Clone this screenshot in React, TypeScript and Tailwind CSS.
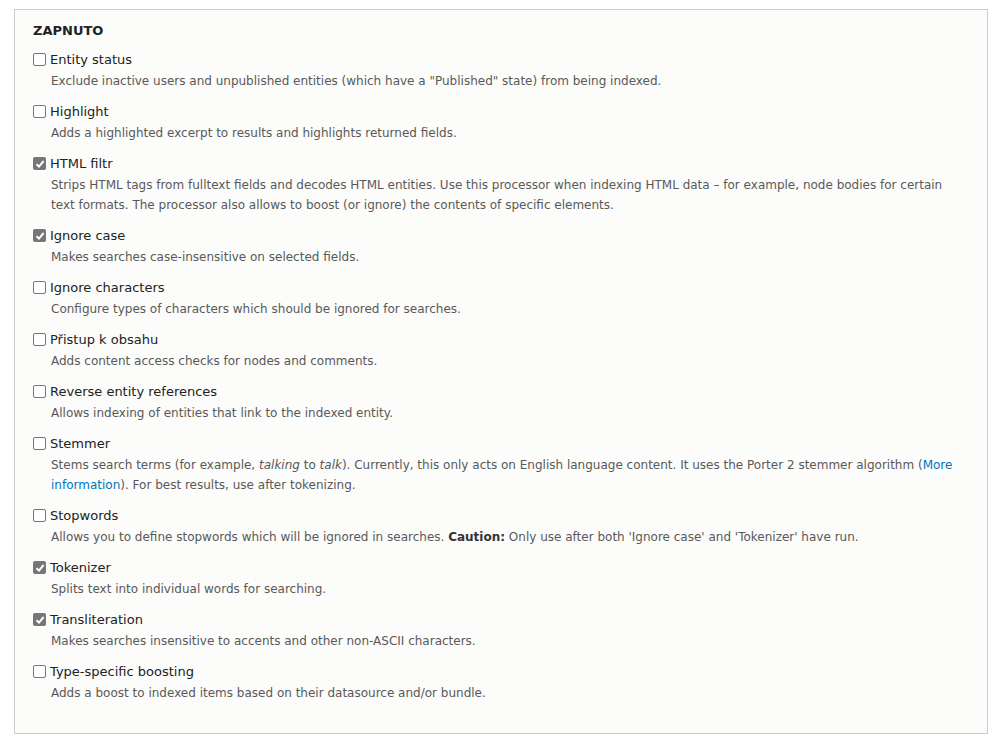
import React from "react";

interface Processor {
  id: string;
  label: string;
  checked: boolean;
  description: React.ReactNode;
}

const processors: Processor[] = [
  {
    id: "entity_status",
    label: "Entity status",
    checked: false,
    description:
      'Exclude inactive users and unpublished entities (which have a "Published" state) from being indexed.',
  },
  {
    id: "highlight",
    label: "Highlight",
    checked: false,
    description: "Adds a highlighted excerpt to results and highlights returned fields.",
  },
  {
    id: "html_filter",
    label: "HTML filtr",
    checked: true,
    description:
      "Strips HTML tags from fulltext fields and decodes HTML entities. Use this processor when indexing HTML data – for example, node bodies for certain text formats. The processor also allows to boost (or ignore) the contents of specific elements.",
  },
  {
    id: "ignorecase",
    label: "Ignore case",
    checked: true,
    description: "Makes searches case-insensitive on selected fields.",
  },
  {
    id: "ignore_character",
    label: "Ignore characters",
    checked: false,
    description: "Configure types of characters which should be ignored for searches.",
  },
  {
    id: "content_access",
    label: "Přistup k obsahu",
    checked: false,
    description: "Adds content access checks for nodes and comments.",
  },
  {
    id: "reverse_entity_references",
    label: "Reverse entity references",
    checked: false,
    description: "Allows indexing of entities that link to the indexed entity.",
  },
  {
    id: "stemmer",
    label: "Stemmer",
    checked: false,
    description: (
      <>
        Stems search terms (for example, <em>talking</em> to <em>talk</em>). Currently, this only
        acts on English language content. It uses the Porter 2 stemmer algorithm (
        <a href="#" className="text-[#0074bd] no-underline">
          More information
        </a>
        ). For best results, use after tokenizing.
      </>
    ),
  },
  {
    id: "stopwords",
    label: "Stopwords",
    checked: false,
    description: (
      <>
        Allows you to define stopwords which will be ignored in searches.{" "}
        <strong className="text-[#333]">Caution:</strong> Only use after both 'Ignore case' and
        'Tokenizer' have run.
      </>
    ),
  },
  {
    id: "tokenizer",
    label: "Tokenizer",
    checked: true,
    description: "Splits text into individual words for searching.",
  },
  {
    id: "transliteration",
    label: "Transliteration",
    checked: true,
    description: "Makes searches insensitive to accents and other non-ASCII characters.",
  },
  {
    id: "type_boost",
    label: "Type-specific boosting",
    checked: false,
    description: "Adds a boost to indexed items based on their datasource and/or bundle.",
  },
];

// Seven-style checkbox
const Box: React.FC<{ checked: boolean }> = ({ checked }) =>
  checked ? (
    <span className="flex h-[13px] w-[13px] shrink-0 items-center justify-center rounded-[2px] bg-[#767676]">
      <svg width="10" height="10" viewBox="0 0 10 10">
        <path d="M1.5 5.2 L4 7.6 L8.6 2" fill="none" stroke="#fff" strokeWidth="2" />
      </svg>
    </span>
  ) : (
    <span className="h-[13px] w-[13px] shrink-0 rounded-[2px] border border-[#767676] bg-white" />
  );

export default function App() {
  return (
    <div className="min-h-[740px] bg-white pl-[14px] pr-[6px] pt-[9px] font-['DejaVu_Sans',sans-serif] text-[#222]">
      <fieldset className="h-[725px] border border-[#ccc] bg-[#fcfcfa] px-[18px] pt-[12px]">
        <div className="text-[13px] font-bold uppercase leading-[18px] text-[#222]">Zapnuto</div>
        <div className="mt-[7px] flex flex-col gap-[8px]">
          {processors.map((p) => (
            <div key={p.id}>
              <label className="flex h-[24px] items-center gap-[4px] pt-[1px] text-[13px]">
                <Box checked={p.checked} />
                <span>{p.label}</span>
              </label>
              <div className="pl-[18px] text-[12px] leading-[20px] text-[#595959]">
                {p.description}
              </div>
            </div>
          ))}
        </div>
      </fieldset>
    </div>
  );
}
